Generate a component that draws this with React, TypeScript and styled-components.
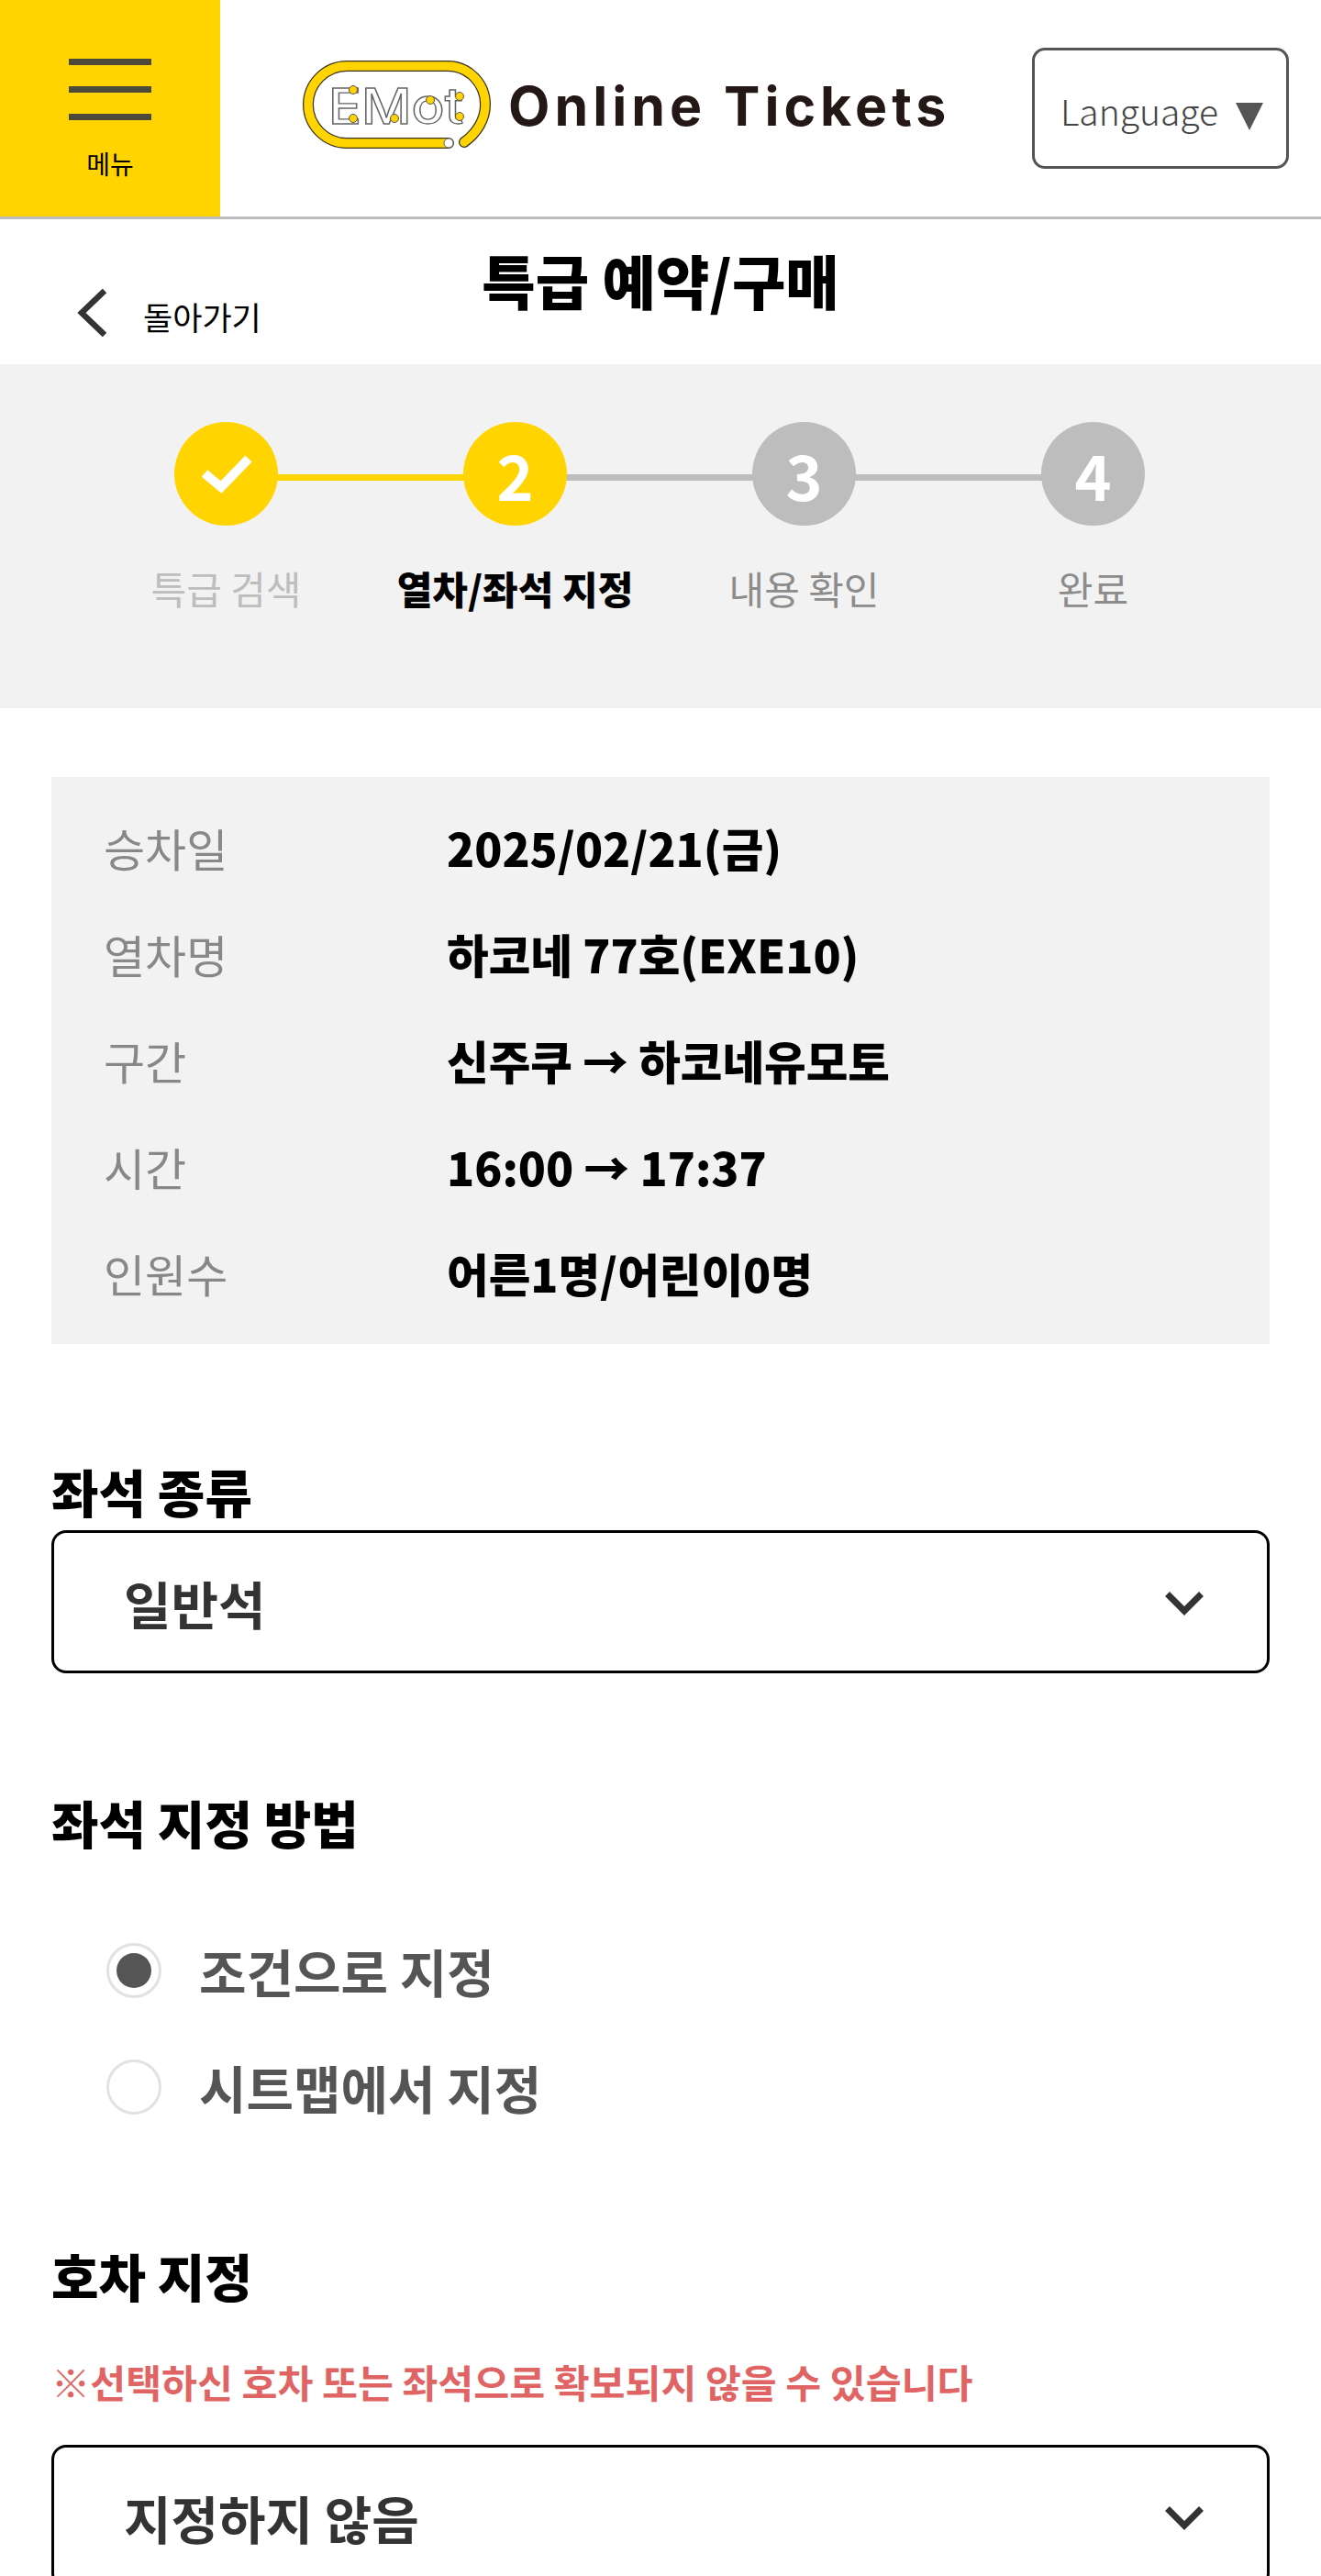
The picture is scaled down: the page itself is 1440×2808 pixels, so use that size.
import React from "react";
import styled, { createGlobalStyle } from "styled-components";

const GlobalStyle = createGlobalStyle`
  html, body {
    margin: 0;
    padding: 0;
    background: #fff;
  }
  body {
    font-family: "Noto Sans CJK KR", "Noto Sans", sans-serif;
    color: #000;
  }
  * {
    box-sizing: border-box;
  }
`;

const Page = styled.div`
  width: 1440px;
  height: 2808px;
  overflow: hidden;
`;

const Header = styled.header`
  display: flex;
  align-items: center;
  height: 239px;
  border-bottom: 3px solid #bdbdbd;
`;

const MenuButton = styled.div`
  width: 240px;
  height: 236px;
  flex: none;
  background: #ffd400;
  display: flex;
  flex-direction: column;
  align-items: center;
  padding-top: 64px;
`;

const MenuLine = styled.span`
  display: block;
  width: 90px;
  height: 7px;
  margin-bottom: 23px;
  background: #4d4a3c;
`;

const MenuLabel = styled.span`
  font-size: 28px;
  line-height: 30px;
  margin-top: 9px;
`;

const Logo = styled.div`
  display: flex;
  align-items: center;
  margin-left: 88px;
  padding-bottom: 6px;
  gap: 16px;
  width: 800px;
  flex: none;
`;

const LogoText = styled.span`
  font-family: "Inter", sans-serif;
  font-weight: 700;
  font-size: 59px;
  letter-spacing: 5px;
  line-height: 1;
  color: #231815;
  white-space: nowrap;
`;

const LanguageBox = styled.div`
  width: 280px;
  height: 132px;
  margin-left: -3px;
  border: 3px solid #555;
  border-radius: 14px;
  display: flex;
  align-items: center;
  justify-content: space-between;
  padding: 4px 25px 0 28px;
  font-size: 39px;
  font-weight: 300;
  color: #444;

  svg {
    margin-top: 14px;
  }
`;

const TitleRow = styled.div`
  display: grid;
  grid-template-columns: 1fr auto 1fr;
  height: 158px;
`;

const BackLink = styled.div`
  display: flex;
  align-items: center;
  gap: 40px;
  padding: 52px 0 0 84px;
  font-size: 35px;
  font-weight: 400;

  svg {
    margin-top: -6px;
  }
`;

const Title = styled.h1`
  margin: 0;
  padding-top: 22px;
  font-size: 63.5px;
  line-height: 86px;
  font-weight: 900;
`;

const Steps = styled.div`
  height: 375px;
  background: #f2f2f2;
  padding: 63px 89px 0;
  display: grid;
  grid-template-columns: repeat(4, 315px);
`;

const Step = styled.div`
  position: relative;
  display: flex;
  flex-direction: column;
  align-items: center;
`;

const Connector = styled.span<{ $on: boolean }>`
  position: absolute;
  top: 57px;
  left: 50%;
  width: 100%;
  height: 7px;
  background: ${(p) => (p.$on ? "#ffd400" : "#bdbdbd")};
`;

const Circle = styled.span<{ $on: boolean }>`
  position: relative;
  width: 113px;
  height: 113px;
  border-radius: 50%;
  background: ${(p) => (p.$on ? "#ffd400" : "#bdbdbd")};
  color: #fff;
  font-size: 68px;
  line-height: 113px;
  font-weight: 700;
  display: flex;
  align-items: center;
  justify-content: center;
`;

const StepLabel = styled.span<{ $color: string; $bold?: boolean }>`
  margin-top: 38px;
  font-size: 42px;
  line-height: 60px;
  white-space: nowrap;
  color: ${(p) => p.$color};
  font-weight: ${(p) => (p.$bold ? 900 : 400)};
`;

const Content = styled.main`
  padding: 75px 56px 0;
`;

const InfoBox = styled.dl`
  margin: 0;
  height: 618px;
  background: #f2f2f2;
  padding: 18px 57px 0;
`;

const InfoRow = styled.div`
  display: flex;
  height: 116px;
  align-items: center;
`;

const InfoLabel = styled.dt`
  width: 374px;
  font-size: 49px;
  color: #888;
`;

const InfoValue = styled.dd`
  margin: 0;
  font-size: 49.6px;
  font-weight: 900;
`;

const SectionTitle = styled.h2<{ $top: number; $bottom?: number }>`
  margin: ${(p) => p.$top}px 0 ${(p) => p.$bottom ?? 0}px;
  font-size: 56px;
  line-height: 80px;
  font-weight: 900;
`;

const SelectBox = styled.div`
  height: 156px;
  border: 3px solid #000;
  border-radius: 16px;
  display: flex;
  align-items: center;
  justify-content: space-between;
  padding: 0 69px 0 76px;
  font-size: 56px;
  font-weight: 700;
  color: #333;

  svg {
    margin-top: 4px;
  }
`;

const RadioGroup = styled.div`
  padding: 58px 0 0 60px;
`;

const RadioRow = styled.div`
  display: flex;
  align-items: center;
  gap: 41px;
  height: 127px;
  font-size: 56px;
  font-weight: 700;
  color: #555;
`;

const RadioMark = styled.span<{ $checked?: boolean }>`
  width: 60px;
  height: 60px;
  border-radius: 50%;
  border: 3px solid #e2e2e2;
  background: #fff;
  display: flex;
  align-items: center;
  justify-content: center;

  &::after {
    content: "";
    display: ${(p) => (p.$checked ? "block" : "none")};
    width: 38px;
    height: 38px;
    border-radius: 50%;
    background: #555;
  }
`;

const Warning = styled.p`
  margin: 46px 0 39px;
  font-size: 42.3px;
  line-height: 60px;
  font-weight: 700;
  color: #e06464;
`;

const RING =
  "M161 91 H50 C27 91 8 72 8 49 C8 26 27 7 50 7 H160 C183 7 201 26 201 49 C201 65 192 80 178 90";

function EmotLogo() {
  return (
    <svg width="210" height="100" viewBox="0 0 210 100" fill="none">
      <path d={RING} stroke="#3a3420" strokeWidth="12" strokeLinecap="round" />
      <path d={RING} stroke="#ffd400" strokeWidth="9.5" strokeLinecap="round" />
      <circle cx="161" cy="91" r="5" fill="#fff" stroke="#666" strokeWidth="1" />
      <text
        x="30"
        y="70"
        fontFamily="Inter, sans-serif"
        fontSize="54"
        fontWeight="500"
        fill="#fff"
        stroke="#666"
        strokeWidth="1.4"
        textLength="147"
        lengthAdjust="spacingAndGlyphs"
      >
        EMot
      </text>
      <g fill="#ffd400" stroke="#555" strokeWidth="1">
        <circle cx="57" cy="33" r="4.5" />
        <circle cx="57" cy="64" r="4.5" />
        <circle cx="102" cy="64" r="4.5" />
        <circle cx="141" cy="44" r="4.5" />
        <circle cx="173" cy="40" r="4.5" />
        <circle cx="173" cy="62" r="4.5" />
      </g>
    </svg>
  );
}

function ChevronLeft() {
  return (
    <svg width="32" height="52" viewBox="0 0 32 52" fill="none">
      <path d="M30 2 L5 26 L30 50" stroke="#333" strokeWidth="6.5" />
    </svg>
  );
}

function ChevronDown() {
  return (
    <svg width="42" height="26" viewBox="0 0 42 26" fill="none">
      <path d="M2.5 2.5 L21 21 L39.5 2.5" stroke="#333" strokeWidth="7" />
    </svg>
  );
}

function CheckMark() {
  return (
    <svg width="56" height="44" viewBox="0 0 56 44" fill="none">
      <path d="M4 21 L22 36 L52 5" stroke="#fff" strokeWidth="10" />
    </svg>
  );
}

function LangArrow() {
  return (
    <svg width="30" height="30" viewBox="0 0 30 30">
      <path d="M0 0 H30 L15 30 Z" fill="#555" />
    </svg>
  );
}

const steps = [
  { mark: "check", label: "특급 검색", on: true, lineOn: true, color: "#bdbdbd" },
  { mark: "2", label: "열차/좌석 지정", on: true, lineOn: false, color: "#000", bold: true },
  { mark: "3", label: "내용 확인", on: false, lineOn: false, color: "#8c8c8c" },
  { mark: "4", label: "완료", on: false, lineOn: false, color: "#8c8c8c" },
];

const info = [
  ["승차일", "2025/02/21(금)"],
  ["열차명", "하코네 77호(EXE10)"],
  ["구간", "신주쿠 → 하코네유모토"],
  ["시간", "16:00 → 17:37"],
  ["인원수", "어른1명/어린이0명"],
];

export default function App() {
  return (
    <Page>
      <GlobalStyle />
      <Header>
        <MenuButton>
          <MenuLine />
          <MenuLine />
          <MenuLine />
          <MenuLabel>메뉴</MenuLabel>
        </MenuButton>
        <Logo>
          <EmotLogo />
          <LogoText>Online Tickets</LogoText>
        </Logo>
        <LanguageBox>
          Language
          <LangArrow />
        </LanguageBox>
      </Header>

      <TitleRow>
        <BackLink>
          <ChevronLeft />
          돌아가기
        </BackLink>
        <Title>특급 예약/구매</Title>
        <div />
      </TitleRow>

      <Steps>
        {steps.map((s, i) => (
          <Step key={s.label}>
            {i < steps.length - 1 && <Connector $on={s.lineOn} />}
            <Circle $on={s.on}>{s.mark === "check" ? <CheckMark /> : s.mark}</Circle>
            <StepLabel $color={s.color} $bold={s.bold}>
              {s.label}
            </StepLabel>
          </Step>
        ))}
      </Steps>

      <Content>
        <InfoBox>
          {info.map(([label, value]) => (
            <InfoRow key={label}>
              <InfoLabel>{label}</InfoLabel>
              <InfoValue>{value}</InfoValue>
            </InfoRow>
          ))}
        </InfoBox>

        <SectionTitle $top={120} $bottom={3}>
          좌석 종류
        </SectionTitle>
        <SelectBox>
          일반석
          <ChevronDown />
        </SelectBox>

        <SectionTitle $top={122}>좌석 지정 방법</SectionTitle>
        <RadioGroup>
          <RadioRow>
            <RadioMark $checked />
            조건으로 지정
          </RadioRow>
          <RadioRow>
            <RadioMark />
            시트맵에서 지정
          </RadioRow>
        </RadioGroup>

        <SectionTitle $top={102}>호차 지정</SectionTitle>
        <Warning>※선택하신 호차 또는 좌석으로 확보되지 않을 수 있습니다</Warning>
        <SelectBox>
          지정하지 않음
          <ChevronDown />
        </SelectBox>
      </Content>
    </Page>
  );
}
